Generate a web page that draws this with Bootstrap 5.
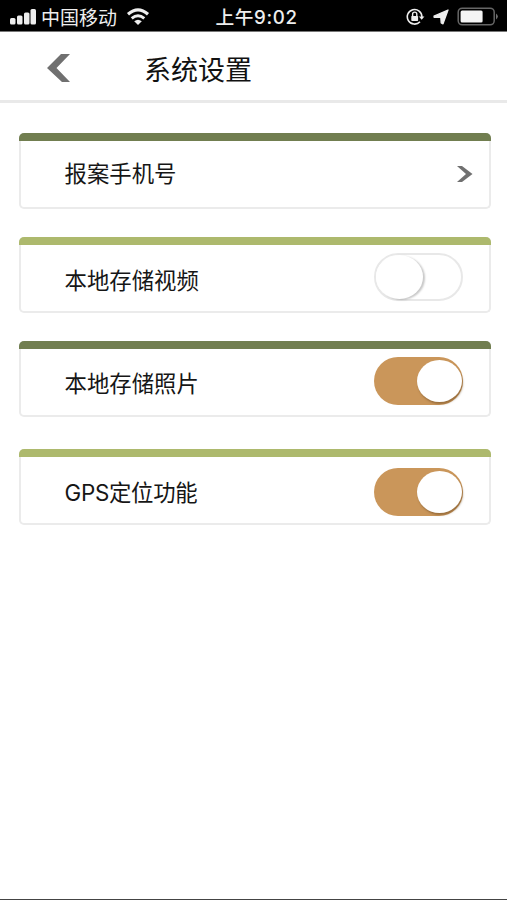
<!DOCTYPE html>
<html lang="zh-CN">
<head>
<meta charset="utf-8">
<meta name="viewport" content="width=device-width, initial-scale=1">
<title>系统设置</title>
<link href="https://cdn.jsdelivr.net/npm/bootstrap@5.3.0/dist/css/bootstrap.min.css" rel="stylesheet">
<style>
  body { font-family: Inter, "Noto Sans CJK SC", sans-serif; color: #161616; height: 900px; border-bottom: 1px solid #444; overflow: hidden; }
  svg { display: block; flex: none; }
  .status { height: 32px; padding: 4px 8px 0 10px; background: #000; border-bottom: 1px solid #777; color: #eee; font-size: 19px; line-height: 27px; display: grid; grid-template-columns: 1fr auto 1fr; }
  .status svg { margin-top: -2px; }
  .carrier { margin: 1px 0 0 5px; }
  .clock { font-size: 18.7px; font-weight: 500; letter-spacing: .6px; padding: 0 0 0 4px; }
  .topbar { height: 71px; padding: 4px 0 0 46px; border-bottom: 3px solid #e9e9e9; }
  .page-title { font-size: 27px; line-height: 40px; margin: 5px 0 0 73px; font-weight: 400; color: #111; }
  .settings { padding: 30px 16px 0 19px; }
  .setting { height: 76px; margin-bottom: 28px; border: 2px solid #ebebeb; border-top: 0; border-radius: 5px; }
  .setting::before { content: ""; height: 8px; margin: 0 -2px; border-radius: 5px 5px 0 0; background: #adb96d; flex: none; }
  .setting.olive::before { background: #717e50; }
  .setting .card-body { padding: 0 26px 0 43.500px; }
  .setting .link-body { padding-right: 16px; }
  .setting.location { margin-top: 32px; }
  .setting.location .card-body { padding-top: 3px; }
  .label { font-size: 22.4px; line-height: 32px; }
  .video .label { padding-top: 6px; }
  .photo .label { padding-top: 4px; }
  .location .label { letter-spacing: -.3px; padding-top: 2px; }
  .video .toggle, .photo .toggle { margin-bottom: 2px; }
  .toggle { width: 89px; height: 48px; padding: 3px; border-radius: 24px; border: 0; background: #ca965a; }
  .toggle i { display: block; width: 45px; height: 42px; border-radius: 50%; background: #fff; margin-left: 40px; box-shadow: 1px 2px 2px rgba(110, 75, 35, .5); }
  .toggle.off { background: #fff; border: 2px solid #e8e8e8; padding: 0; }
  .toggle.off i { width: 47px; height: 44px; margin-left: 0; box-shadow: 2px 1px 2px rgba(0, 0, 0, .22); }
</style>
</head>
<body class="bg-white">
<header>
  <div class="status">
    <div class="d-flex align-items-center">
      <svg width="26" height="18" fill="#eee"><rect x="0" y="10" width="5.500" height="6.500" rx="1.500"/><rect x="7" y="7.500" width="5.500" height="9" rx="1.500"/><rect x="14" y="4.500" width="5.500" height="12" rx="1.500"/><rect x="20.500" y="1" width="5.500" height="15.500" rx="1.500"/></svg>
      <span class="carrier">中国移动</span>
      <svg class="ms-2" width="26" height="18" viewBox="-2 0 26 18" fill="none" stroke="#eee"><path d="M1 6.200Q11 -2.400 21 6.200" stroke-width="3.200"/><path d="M4.700 10.300Q11 5 17.300 10.300" stroke-width="2.900"/><path d="M11 17L7.200 13.300Q11 10.200 14.800 13.300Z" fill="#eee" stroke="none"/></svg>
    </div>
    <div class="clock">上午9:02</div>
    <div class="d-flex align-items-center justify-content-end">
      <svg width="19" height="18" fill="none" stroke="#eee"><path d="M14 13.700A7.300 7.300 0 1 1 15.900 9" stroke-width="1.600"/><path d="M12.900 8.600h5.500l-2.750 3.200z" fill="#eee" stroke="none"/><rect x="5.300" y="7.900" width="6.800" height="5.100" rx=".7" fill="#eee" stroke="none"/><path d="M6.600 8V6.200a2.100 2.100 0 0 1 4.200 0V8" stroke-width="1.400"/></svg>
      <svg class="ms-2" width="16" height="16" fill="#eee" stroke="#eee" stroke-width="1.300" stroke-linejoin="round"><path d="M15 1L10 14.800 8.200 14 7.800 8.300 1.200 8.300 1 7.200z"/></svg>
      <svg class="ms-2" width="42" height="20"><rect x="1.200" y="1.200" width="36" height="16.600" rx="4" fill="none" stroke="#666" stroke-width="1.500"/><rect x="3.600" y="3.600" width="22" height="12" rx="1.500" fill="#f4f4f4"/><path d="M39.200 6.600q3 3 0 6z" fill="#888"/></svg>
    </div>
  </div>
  <nav class="topbar d-flex align-items-center">
    <svg width="25" height="30" viewBox="0 0 25 30"><path d="M15 1h9L10.500 15 24 29h-8L1 15z" fill="#707070"/></svg>
    <h1 class="page-title">系统设置</h1>
  </nav>
</header>
<main class="settings">
  <section class="card setting olive">
    <div class="card-body link-body d-flex align-items-center justify-content-between">
      <span class="label">报案手机号</span>
      <svg width="16" height="16" viewBox="0 0 16 16"><path d="M0 0h5l10.500 8L5 16H0l9-8z" fill="#707070"/></svg>
    </div>
  </section>
  <section class="card setting video">
    <div class="card-body d-flex align-items-center justify-content-between">
      <span class="label">本地存储视频</span>
      <span class="toggle off" role="switch" aria-checked="false"><i></i></span>
    </div>
  </section>
  <section class="card setting olive photo">
    <div class="card-body d-flex align-items-center justify-content-between">
      <span class="label">本地存储照片</span>
      <span class="toggle" role="switch" aria-checked="true"><i></i></span>
    </div>
  </section>
  <section class="card setting location">
    <div class="card-body d-flex align-items-center justify-content-between">
      <span class="label">GPS定位功能</span>
      <span class="toggle" role="switch" aria-checked="true"><i></i></span>
    </div>
  </section>
</main>
<script src="https://cdn.jsdelivr.net/npm/bootstrap@5.3.0/dist/js/bootstrap.bundle.min.js"></script>
</body>
</html>
